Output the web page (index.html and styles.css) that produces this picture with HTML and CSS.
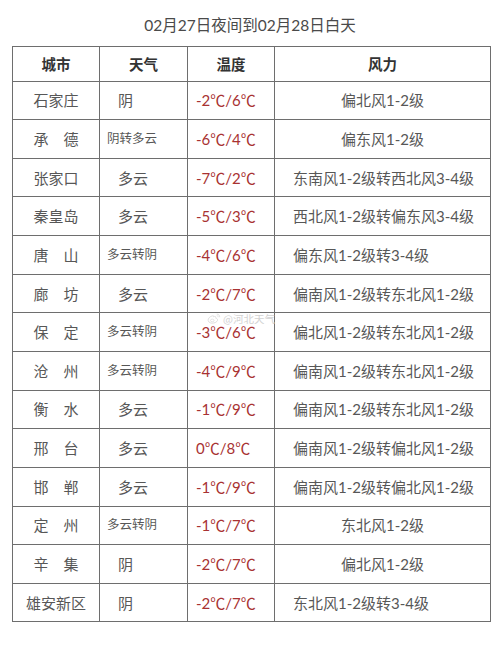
FILE: index.html
```html
<!DOCTYPE html>
<html lang="zh-CN">
<head>
<meta charset="utf-8">
<title>天气预报</title>
<link rel="stylesheet" href="styles.css">
</head>
<body>
<div class="page">
  <div class="title">02月27日夜间到02月28日白天</div>
  <table class="wx">
    <colgroup>
      <col class="c1"><col class="c2"><col class="c3"><col class="c4">
    </colgroup>
    <thead>
      <tr><th>城市</th><th>天气</th><th>温度</th><th>风力</th></tr>
    </thead>
    <tbody>
      <tr><td class="city">石家庄</td><td class="w">阴</td><td class="t">-2℃/6℃</td><td class="f ctr">偏北风1-2级</td></tr>
      <tr><td class="city">承　德</td><td class="w sm">阴转多云</td><td class="t">-6℃/4℃</td><td class="f ctr">偏东风1-2级</td></tr>
      <tr><td class="city">张家口</td><td class="w">多云</td><td class="t">-7℃/2℃</td><td class="f">东南风1-2级转西北风3-4级</td></tr>
      <tr><td class="city">秦皇岛</td><td class="w">多云</td><td class="t">-5℃/3℃</td><td class="f">西北风1-2级转偏东风3-4级</td></tr>
      <tr><td class="city">唐　山</td><td class="w sm">多云转阴</td><td class="t">-4℃/6℃</td><td class="f">偏东风1-2级转3-4级</td></tr>
      <tr><td class="city">廊　坊</td><td class="w">多云</td><td class="t">-2℃/7℃</td><td class="f">偏南风1-2级转东北风1-2级</td></tr>
      <tr><td class="city">保　定</td><td class="w sm">多云转阴</td><td class="t">-3℃/6℃</td><td class="f">偏北风1-2级转东北风1-2级</td></tr>
      <tr><td class="city">沧　州</td><td class="w sm">多云转阴</td><td class="t">-4℃/9℃</td><td class="f">偏南风1-2级转东北风1-2级</td></tr>
      <tr><td class="city">衡　水</td><td class="w">多云</td><td class="t">-1℃/9℃</td><td class="f">偏南风1-2级转东北风1-2级</td></tr>
      <tr><td class="city">邢　台</td><td class="w">多云</td><td class="t">0℃/8℃</td><td class="f">偏南风1-2级转偏北风1-2级</td></tr>
      <tr><td class="city">邯　郸</td><td class="w">多云</td><td class="t">-1℃/9℃</td><td class="f">偏南风1-2级转偏北风1-2级</td></tr>
      <tr><td class="city">定　州</td><td class="w sm">多云转阴</td><td class="t">-1℃/7℃</td><td class="f ctr">东北风1-2级</td></tr>
      <tr><td class="city">辛　集</td><td class="w">阴</td><td class="t">-2℃/7℃</td><td class="f ctr">偏北风1-2级</td></tr>
      <tr><td class="city">雄安新区</td><td class="w">阴</td><td class="t">-2℃/7℃</td><td class="f">东北风1-2级转3-4级</td></tr>
    </tbody>
  </table>
  <div class="mark">
    <svg class="mark-logo" viewBox="0 0 20 16" width="14" height="11" aria-hidden="true">
      <path d="M8 4 C4 5 1 8 1.5 11 C2 14 6 15.5 10 14.5 C14 13.5 16 11 15 9 C14.3 7.8 12.8 8 12.5 7.5 C13 6 12.6 4.6 10.8 5 C10 5.2 9.5 5.6 9.2 5.4 C9.6 4.2 9.2 3.6 8 4 Z" fill="none" stroke="#d4d4d4" stroke-width="1.1"/>
      <ellipse cx="7.5" cy="10.8" rx="2.6" ry="1.9" fill="none" stroke="#d4d4d4" stroke-width="0.9"/>
      <path d="M14 1.5 C16.5 1.6 18.5 3.5 18.3 6.2" fill="none" stroke="#d4d4d4" stroke-width="1"/>
      <path d="M14 3.8 C15.4 3.9 16.3 4.9 16.2 6.1" fill="none" stroke="#d4d4d4" stroke-width="0.9"/>
    </svg>
    <span>@河北天气</span>
  </div>
</div>
</body>
</html>
```
FILE: styles.css
```css
html, body {
  margin: 0;
  padding: 0;
  background: #ffffff;
}
.page {
  position: relative;
  width: 500px;
  height: 646px;
  font-family: Lato, "Noto Sans CJK SC", sans-serif;
  color: #575757;
}
.title {
  height: 46px;
  box-sizing: border-box;
  padding-top: 14px;
  text-align: center;
  font-size: 15.5px;
  line-height: 22px;
  color: #4a4a4a;
}
.wx {
  margin-left: 12px;
  width: 478px;
  border-collapse: collapse;
  table-layout: fixed;
}
.c1 { width: 87px; }
.c2 { width: 88px; }
.c3 { width: 87px; }
.c4 { width: 216px; }
.wx th, .wx td {
  border: 1.5px solid #6e6e6e;
  padding: 0;
  white-space: nowrap;
}
.wx th {
  height: 33.5px;
  font-family: "Noto Sans CJK SC", sans-serif;
  font-weight: 700;
  font-size: 14.5px;
  color: #333333;
  text-align: center;
}
.wx td {
  height: 37.65px;
  font-size: 15px;
  line-height: 18px;
}
.city {
  text-align: center;
  font-size: 15px;
}
.w {
  text-align: left;
  padding-left: 18px !important;
}
.w.sm {
  font-size: 12.5px;
  padding-left: 7px !important;
}
.t {
  text-align: left;
  padding-left: 8px !important;
  color: #a83232;
  font-size: 16.5px;
}
.f {
  text-align: left;
  padding-left: 18px !important;
  font-size: 15px;
}
.f.ctr {
  text-align: center;
  padding-left: 0 !important;
}
.mark {
  position: absolute;
  left: 207px;
  top: 313px;
  display: flex;
  align-items: center;
  gap: 2px;
  font-size: 10.5px;
  line-height: 10px;
  color: #d2d2d2;
  font-family: "Noto Sans CJK SC", sans-serif;
}
```
